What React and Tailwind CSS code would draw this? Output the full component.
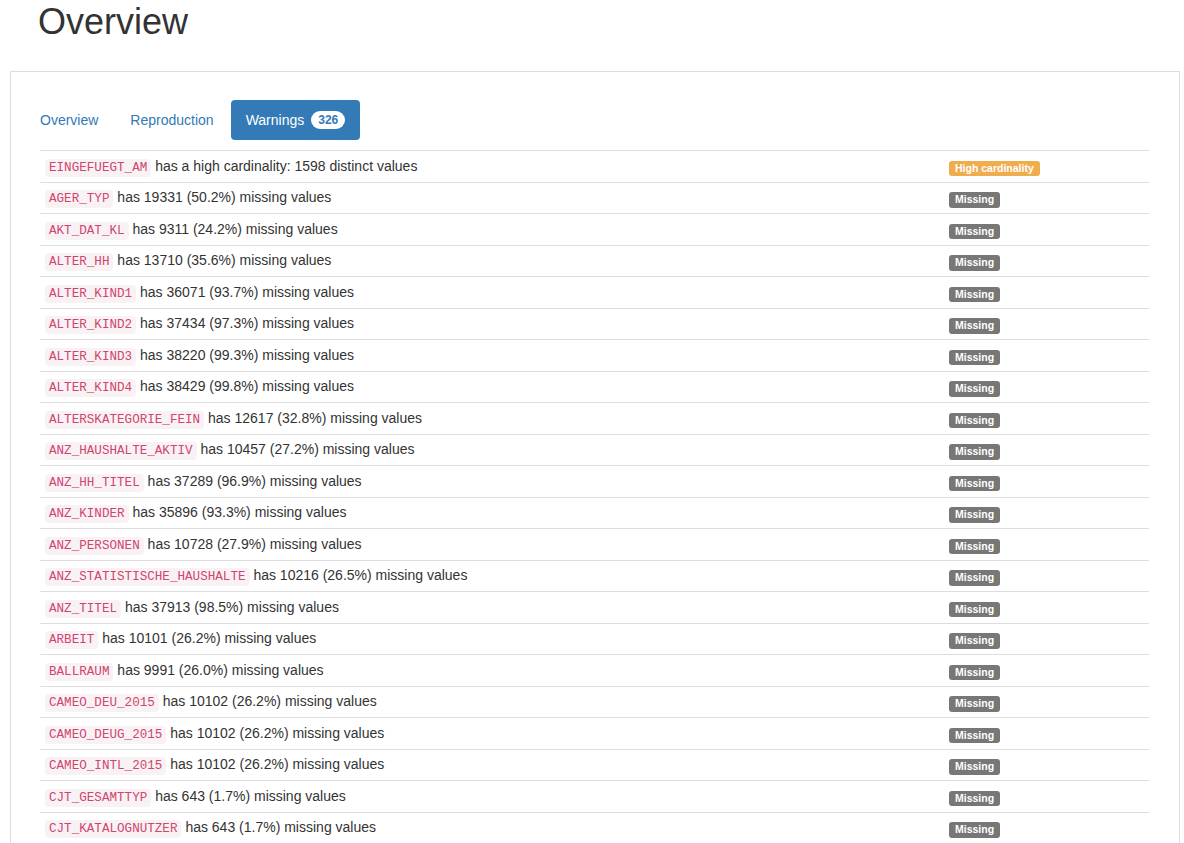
import React from 'react';

const warnings = [
  { col: 'EINGEFUEGT_AM', text: 'has a high cardinality: 1598 distinct values', type: 'high' },
  { col: 'AGER_TYP', text: 'has 19331 (50.2%) missing values' },
  { col: 'AKT_DAT_KL', text: 'has 9311 (24.2%) missing values' },
  { col: 'ALTER_HH', text: 'has 13710 (35.6%) missing values' },
  { col: 'ALTER_KIND1', text: 'has 36071 (93.7%) missing values' },
  { col: 'ALTER_KIND2', text: 'has 37434 (97.3%) missing values' },
  { col: 'ALTER_KIND3', text: 'has 38220 (99.3%) missing values' },
  { col: 'ALTER_KIND4', text: 'has 38429 (99.8%) missing values' },
  { col: 'ALTERSKATEGORIE_FEIN', text: 'has 12617 (32.8%) missing values' },
  { col: 'ANZ_HAUSHALTE_AKTIV', text: 'has 10457 (27.2%) missing values' },
  { col: 'ANZ_HH_TITEL', text: 'has 37289 (96.9%) missing values' },
  { col: 'ANZ_KINDER', text: 'has 35896 (93.3%) missing values' },
  { col: 'ANZ_PERSONEN', text: 'has 10728 (27.9%) missing values' },
  { col: 'ANZ_STATISTISCHE_HAUSHALTE', text: 'has 10216 (26.5%) missing values' },
  { col: 'ANZ_TITEL', text: 'has 37913 (98.5%) missing values' },
  { col: 'ARBEIT', text: 'has 10101 (26.2%) missing values' },
  { col: 'BALLRAUM', text: 'has 9991 (26.0%) missing values' },
  { col: 'CAMEO_DEU_2015', text: 'has 10102 (26.2%) missing values' },
  { col: 'CAMEO_DEUG_2015', text: 'has 10102 (26.2%) missing values' },
  { col: 'CAMEO_INTL_2015', text: 'has 10102 (26.2%) missing values' },
  { col: 'CJT_GESAMTTYP', text: 'has 643 (1.7%) missing values' },
  { col: 'CJT_KATALOGNUTZER', text: 'has 643 (1.7%) missing values' },
];

const WarningRow = ({ col, text, type }) => (
  <div className="flex h-[31.5px] items-center border-t border-[#ddd] pt-[1px]">
    <div className="flex-1 pl-[5px]">
      <code className="rounded-[4px] bg-[#f9f2f4] px-[4px] py-[2px] font-['Liberation_Mono',monospace] text-[12.6px] text-[#d0456e]">
        {col}
      </code>{' '}
      <span>{text}</span>
    </div>
    <div className="w-[206px] pl-[6px]">
      {type === 'high' ? (
        <span className="inline-block rounded-[3px] bg-[#f0ad4e] px-[6px] pt-[2px] pb-[3px] text-[10.5px] font-bold leading-none text-white">
          High cardinality
        </span>
      ) : (
        <span className="inline-block rounded-[3px] bg-[#777] px-[6px] pt-[2px] pb-[3px] text-[10.5px] font-bold leading-none text-white">
          Missing
        </span>
      )}
    </div>
  </div>
);

export default function App() {
  return (
    <div className="h-[843px] overflow-hidden bg-white font-['Liberation_Sans',Arial,sans-serif] text-[14px] leading-[20px] text-[#333]">
      <h1 className="pl-[38px] pt-[2px] text-[36px] font-medium leading-[40px]">Overview</h1>

      <div className="mx-[10px] mt-[29px] w-[1170px] border border-[#ddd] pl-[14px] pr-[15px] pt-[28px]">
        {/* Tabs */}
        <ul className="flex gap-[2px]">
          <li>
            <a className="block rounded-[4px] px-[15px] py-[10px] text-[#337ab7]">Overview</a>
          </li>
          <li>
            <a className="block rounded-[4px] px-[15px] py-[10px] text-[#337ab7]">Reproduction</a>
          </li>
          <li>
            <a className="flex items-center rounded-[4px] bg-[#337ab7] px-[15px] py-[10px] text-white">
              Warnings
              <span className="ml-[7px] rounded-[10px] bg-white px-[7px] py-[3px] text-[12px] font-bold leading-none text-[#337ab7]">
                326
              </span>
            </a>
          </li>
        </ul>

        {/* Warnings table */}
        <div className="ml-[15px] mr-[15px] mt-[10px]">
          {warnings.map((w) => (
            <WarningRow key={w.col} {...w} />
          ))}
        </div>
      </div>
    </div>
  );
}
